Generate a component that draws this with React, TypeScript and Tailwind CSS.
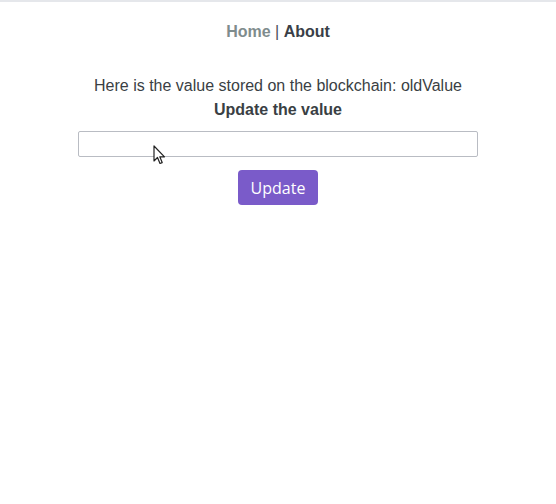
import { useState } from "react";

export default function App() {
    const [value, setValue] = useState("");

    return (
        <div className="min-h-[504px] w-full bg-white border-t-2 border-[#e5e7eb] text-center text-[#3a3f44] font-['Liberation_Sans',Helvetica,Arial,sans-serif] relative">
            <nav className="pt-[20px] text-[16px] font-bold leading-[20px]">
                <a href="#" className="text-[#7f8c8d]">Home</a>
                <span className="font-normal text-[#4a5058]"> | </span>
                <a href="#" className="text-[#3a3f48]">About</a>
            </nav>

            <div className="mt-[32px] flex flex-col items-center">
                <p className="text-[16px] leading-[24px] text-[#3a3f44]">
                    Here is the value stored on the blockchain: oldValue
                </p>
                <p className="text-[16px] leading-[24px] font-bold text-[#3a3f44]">Update the value</p>

                <input
                    value={value}
                    onChange={(e) => setValue(e.target.value)}
                    className="mt-[9px] w-[400px] h-[26px] border border-[#b9bcc3] rounded-[2px] px-2 outline-none"
                />

                <button className="mt-[13px] w-[80px] h-[35px] rounded-[4px] bg-[#7a5bc9] text-white text-[16px] font-['Open_Sans',sans-serif]">
                    Update
                </button>
            </div>

            <svg
                className="absolute left-[153px] top-[143px]"
                width="14"
                height="21"
                viewBox="0 0 14 21"
            >
                <path
                    d="M1 1 L1 16 L4.5 12.5 L7 18.5 L9.2 17.6 L6.8 11.8 L11.5 11.8 Z"
                    fill="white"
                    stroke="#222"
                    strokeWidth="1.2"
                    strokeLinejoin="round"
                />
            </svg>
        </div>
    );
}
